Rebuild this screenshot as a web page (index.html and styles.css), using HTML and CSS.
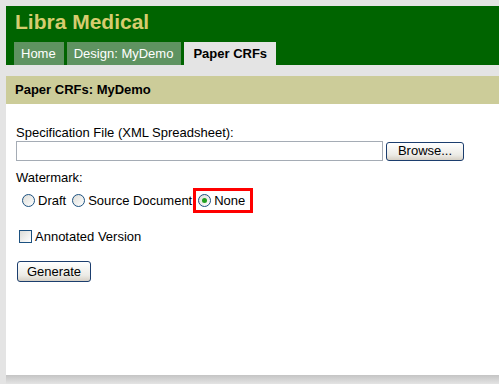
FILE: index.html
```html
<!DOCTYPE html>
<html>
  <head>
    <meta charset="UTF-8" />
    <title>Paper CRFs</title>
    <link rel="stylesheet" href="styles.css">
  </head>
  <body>
    <div class="header">
      <div class="brand">Libra Medical</div>
      <ul class="tabs">
        <li><a href="#">Home</a></li>
        <li><a href="#">Design: MyDemo</a></li>
        <li><a href="#" class="on">Paper CRFs</a></li>
      </ul>
    </div>
    <div class="titlebar">Paper CRFs: MyDemo</div>
    <div class="content">
      <div class="field">
        <label class="lbl">Specification File (XML Spreadsheet):</label>
        <div class="filerow">
          <span class="filebox"></span>
          <button class="btn browse">Browse...</button>
        </div>
      </div>
      <div class="field">
        <div class="lbl">Watermark:</div>
        <div class="radios">
          <span class="opt"><span class="radio"></span>Draft</span>
          <span class="opt"><span class="radio"></span>Source Document</span>
          <span class="opt marked"><span class="radio checked"></span>None</span>
        </div>
      </div>
      <div class="check"><span class="box"></span>Annotated Version</div>
      <button class="btn generate">Generate</button>
    </div>
    <div class="shadow"></div>
  </body>
</html>
```
FILE: styles.css
```css
*{margin: 0;padding: 0}
body{
  background: #e4e4e4;
  font-family: "Liberation Sans", Arial, sans-serif;
  font-size: 13px;
  color: #000;
  padding: 6px 0 0 6px;
  height: 384px;
  box-sizing: border-box;
  overflow: hidden;
}
.header{
  background: #006400;
  height: 59px;
  display: flex;
  flex-direction: column;
  justify-content: space-between;
}
.brand{
  color: #d6cc6e;
  font-size: 21px;
  font-weight: bold;
  padding: 4px 0 0 9px;
  line-height: 24px;
}
.tabs{
  list-style: none;
  display: flex;
  gap: 3px;
  padding-left: 8px;
}
.tabs a{
  display: block;
  height: 23px;
  line-height: 24px;
  padding: 0 8px 0 7px;
  background: #5f9361;
  color: #fff;
  text-decoration: none;
}
.tabs a.on{
  background: #e4e4e4;
  color: #000;
  font-weight: bold;
  padding: 0 9px;
}
.titlebar{
  margin-top: 11px;
  background: #cccc99;
  height: 28px;
  line-height: 28px;
  padding-left: 9px;
  font-weight: bold;
}
.content{
  background: #fff;
  height: 271px;
  padding: 21px 0 0 10px;
  box-sizing: border-box;
}
.field{
  margin-bottom: 9px;
}
.lbl{
  display: block;
  line-height: 15px;
}
.filerow{
  display: flex;
  align-items: center;
  gap: 3px;
  margin-top: 1px;
}
.filebox{
  width: 365px;
  height: 18px;
  border: 1px solid #a5acb5;
  background: #fff;
}
.btn{
  font-family: "Liberation Sans", Arial, sans-serif;
  font-size: 13px;
  color: #000;
  border: 1px solid #1c3e6e;
  border-radius: 3px;
  background: linear-gradient(#ffffff, #ecebe6 70%, #d6d0c5);
  height: 19px;
  line-height: 16px;
}
.browse{
  width: 78px;
}
.radios{
  display: flex;
  align-items: center;
  margin-top: 3px;
  padding-left: 6px;
}
.opt{
  display: flex;
  align-items: center;
  height: 19px;
  margin-right: 6px;
}
.opt.marked{
  border: 3px solid #f00;
  padding: 0 5px 0 2px;
  margin-left: -5px;
}
.radio{
  width: 11px;
  height: 11px;
  border: 1px solid #1c5180;
  border-radius: 50%;
  background: linear-gradient(135deg, #dcdcd7, #fff);
  margin-right: 3px;
  position: relative;
}
.radio.checked::after{
  content: "";
  position: absolute;
  left: 3px;
  top: 3px;
  width: 5px;
  height: 5px;
  border-radius: 50%;
  background: #21a121;
}
.check{
  display: flex;
  align-items: center;
  margin-top: 16px;
  padding-left: 3px;
}
.box{
  width: 11px;
  height: 11px;
  border: 1px solid #1c5180;
  background: linear-gradient(135deg, #dcdcd7, #fff);
  margin-right: 3px;
}
.generate{
  margin-top: 17px;
  margin-left: 1px;
  width: 74px;
  height: 21px;
}
.shadow{
  height: 9px;
  background: linear-gradient(#c4c4c4, #e4e4e4);
}
```
